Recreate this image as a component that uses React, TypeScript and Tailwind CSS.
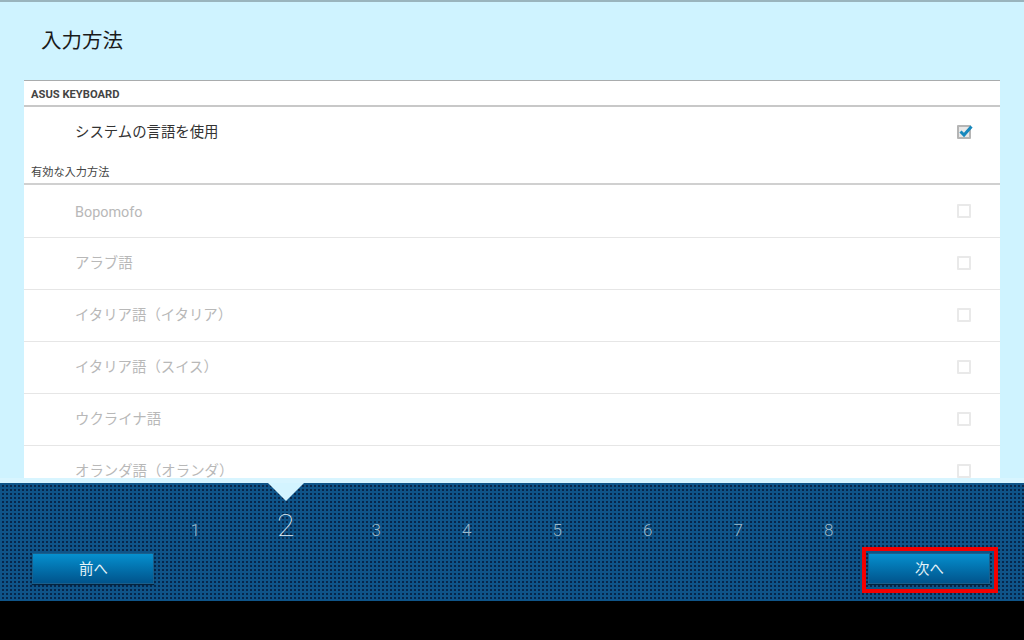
const F = "font-['Roboto','Noto_Sans_CJK_JP',sans-serif]";

const rows = ["Bopomofo", "アラブ語", "イタリア語（イタリア）", "イタリア語（スイス）", "ウクライナ語", "オランダ語（オランダ）"];
const steps = ["1", "2", "3", "4", "5", "6", "7", "8"];

function Box({ checked }: { checked?: boolean }) {
  return (
    <div className={`relative w-[14px] h-[14px] rounded-[1px] border-2 ${checked ? "border-[#b5b5b5] bg-[#e8e8e8]" : "border-[#e9e9e9]"}`}>
      {checked && (
        <svg className="absolute left-[-1px] top-[-4px]" width="16" height="16" viewBox="0 0 16 16">
          <path d="M2.5 8.5 L6 12 L13.5 3.5" fill="none" stroke="#1688bd" strokeWidth="3" />
        </svg>
      )}
    </div>
  );
}

function Btn({ label }: { label: string }) {
  return (
    <div className="w-[122px] h-[31px] pt-[3px] pl-[1px] flex items-center justify-center text-[14.4px] text-[#e6f3f8] bg-gradient-to-b from-[#0690cf] to-[#01548c] border border-[#1a5f8c] shadow-[0_1px_1px_#04233f]">
      {label}
    </div>
  );
}

export default function App() {
  return (
    <div className={`${F} w-[1024px] h-[640px] overflow-hidden flex flex-col bg-[#cff3ff]`}>
      <div className="h-[2px] bg-[#9ab4bd] shrink-0" />
      <div className="h-[78px] shrink-0 pl-[41px] pt-[25px] text-[20.5px] leading-[28px] text-[#1a1a1a]">入力方法</div>
      <div className="mx-[24px] h-[398px] shrink-0 bg-white border-t border-[#a9acad] overflow-hidden">
        <div className="h-[26px] pl-[7px] pt-[4px] flex items-center text-[11.2px] font-bold text-[#444] border-b-2 border-[#c8c8c8]">ASUS KEYBOARD</div>
        <div className="h-[50px] pl-[51px] pr-[29px] flex items-center justify-between text-[14.4px] text-[#333]">
          <span className="pt-[2px]">システムの言語を使用</span>
          <Box checked />
        </div>
        <div className="h-[28px] pl-[7px] flex items-end pb-[1px] text-[11.2px] text-[#444] border-b-2 border-[#d0d0d0]">有効な入力方法</div>
        {rows.map((r, i) => (
          <div key={r} className={`${i === 0 ? "h-[53px]" : "h-[52px] pb-[1px]"} shrink-0 pl-[51px] pr-[29px] flex items-center justify-between text-[14.4px] text-[#b8b8b8] border-b border-[#e6e6e6]`}>
            <span className={i === 0 ? "pt-[4px]" : "pt-[1px]"}>{r}</span>
            <Box />
          </div>
        ))}
      </div>
      <div className="h-[5px] shrink-0 bg-[#d8f5ff]" />
      <div className="relative h-[118px] shrink-0 px-[32px] bg-[#07264a] bg-[linear-gradient(90deg,#0f5488_2px,transparent_2px),linear-gradient(#0f5488_2px,transparent_2px)] bg-[length:4px_4px]">
        <svg className="absolute left-[268px] top-0" width="36" height="18" viewBox="0 0 36 18">
          <path d="M0 0 H36 L18 18 Z" fill="#d3f4ff" />
        </svg>
        <div className="absolute left-[150px] top-[25px] w-[724px] h-[32px] grid grid-cols-8 items-end text-center font-light text-[#9dbacb] text-[17px] leading-[20px]">
          {steps.map((s) => (
            <span key={s} className={s === "2" ? "text-[32px] leading-[32px] font-thin text-[#e2eef4] translate-y-[1px]" : ""}>{s}</span>
          ))}
        </div>
        <div className="pt-[70px] flex justify-between pr-[2px]">
          <Btn label="前へ" />
          <div className="relative">
            <Btn label="次へ" />
            <div className="absolute left-[-6px] top-[-6px] w-[136px] h-[46px] border-[4px] border-[#f40000]" />
          </div>
        </div>
      </div>
      <div className="flex-1 bg-black" />
    </div>
  );
}
